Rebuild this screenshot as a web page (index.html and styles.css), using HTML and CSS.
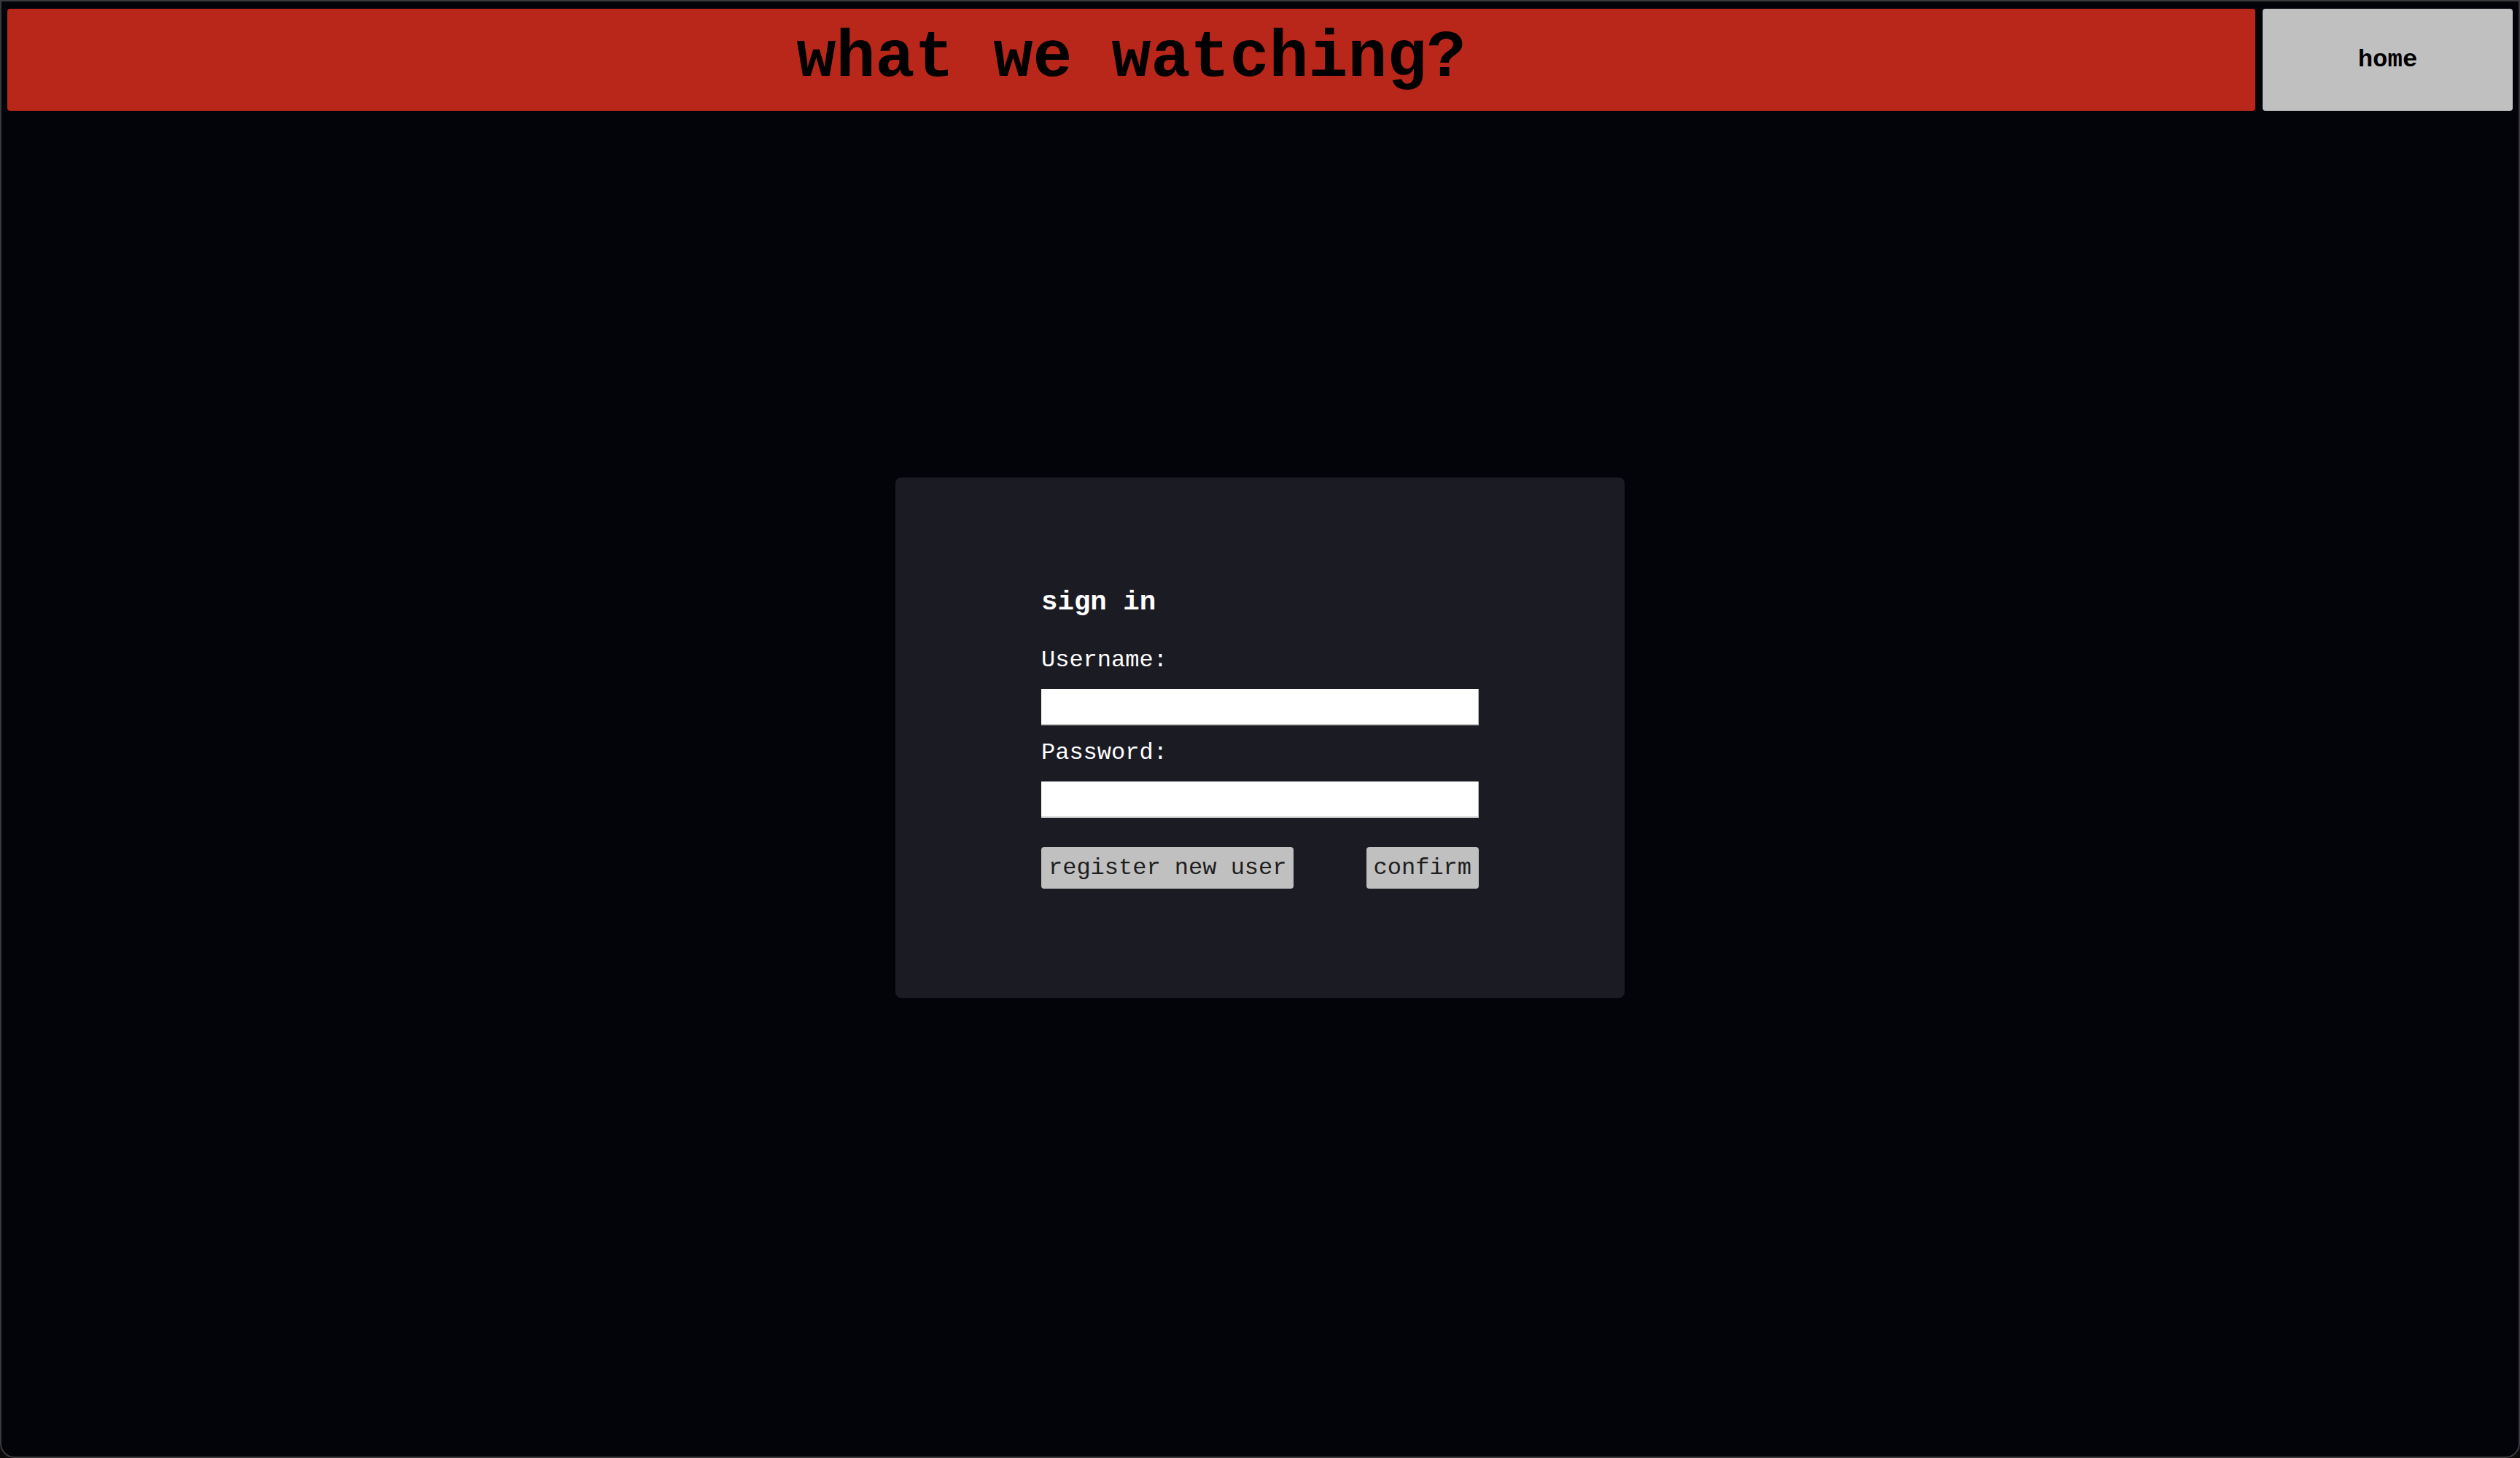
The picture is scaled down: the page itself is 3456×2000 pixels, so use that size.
FILE: index.html
```html
<!DOCTYPE html>
<html lang="en">
<head>
<meta charset="utf-8">
<title>what we watching?</title>
<link rel="stylesheet" href="styles.css">
</head>
<body>
<div class="window">
  <header class="topbar">
    <div class="title-bar"><h1 class="title">what we watching?</h1></div>
    <button class="home-btn">home</button>
  </header>
  <main class="main">
    <section class="card">
      <h3 class="card-title">sign in</h3>
      <label class="field-label" for="username">Username:</label>
      <input class="field-input" id="username" type="text">
      <label class="field-label" for="password">Password:</label>
      <input class="field-input" id="password" type="password">
      <div class="actions">
        <button class="btn">register new user</button>
        <button class="btn">confirm</button>
      </div>
    </section>
  </main>
</div>
</body>
</html>
```
FILE: styles.css
```css
html, body {
  margin: 0;
  padding: 0;
  background: #0d0a0a;
}
body {
  font-family: "Liberation Mono", "Courier New", monospace;
}
.window {
  width: 3456px;
  height: 2000px;
  box-sizing: border-box;
  background: #03030a;
  border: 2px solid #3a3a3c;
  border-radius: 0 0 20px 20px;
  overflow: hidden;
}
.topbar {
  display: flex;
  gap: 10px;
  padding: 10px 8px 0 8px;
  height: 150px;
  box-sizing: border-box;
}
.title-bar {
  flex: 1;
  background: #b9261a;
  border-radius: 4px;
  display: flex;
  align-items: center;
  justify-content: center;
}
.title {
  margin: 0 0 4px 0;
  font-family: "Liberation Mono", "Courier New", monospace;
  font-weight: bold;
  font-size: 90px;
  color: #000;
}
.home-btn {
  width: 343px;
  border: none;
  border-radius: 4px;
  background: #c0c0c0;
  color: #000;
  font-family: "Liberation Mono", "Courier New", monospace;
  font-weight: bold;
  font-size: 34px;
  padding: 0;
}
.main {
  display: flex;
  justify-content: center;
  padding-top: 503px;
}
.card {
  width: 1000px;
  box-sizing: border-box;
  padding: 150px 200px;
  background: #1b1b23;
  border-radius: 8px;
  color: #fff;
}
.card-title {
  margin: 0 0 40px 0;
  font-size: 37.4px;
  font-weight: bold;
  line-height: normal;
}
.field-label {
  display: block;
  font-size: 32px;
  line-height: normal;
}
.field-input {
  display: block;
  width: 600px;
  height: 50px;
  box-sizing: border-box;
  margin: 21px 0 19px 0;
  border: none;
  background: #fff;
  box-shadow: inset -1px -2px 0 #c4c4c4;
  font-family: "Liberation Mono", "Courier New", monospace;
  font-size: 28px;
}
.actions {
  display: flex;
  justify-content: space-between;
  margin-top: 40px;
}
.field-input + .field-label + .field-input {
  margin-bottom: 0;
}
.btn {
  border: none;
  border-radius: 4px;
  background: #c0c0c0;
  color: #1e1e1e;
  font-family: "Liberation Mono", "Courier New", monospace;
  font-size: 32px;
  line-height: normal;
  padding: 10px 10px;
}
```
